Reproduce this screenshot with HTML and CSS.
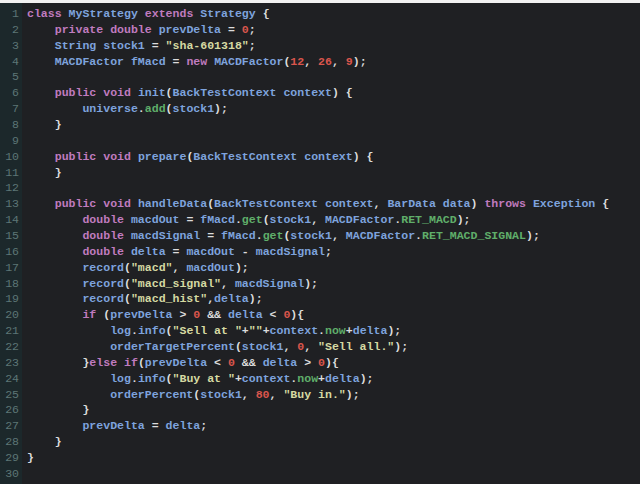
FILE: index.html
```html
<!DOCTYPE html>
<html>
<head>
<meta charset="utf-8">
<link rel="stylesheet" href="styles.css">
</head>
<body>
<div class="topbar"></div>
<div class="editor">
<div class="gutter">
<div>1</div><div>2</div><div>3</div><div>4</div><div>5</div><div>6</div><div>7</div><div>8</div><div>9</div><div>10</div><div>11</div><div>12</div><div>13</div><div>14</div><div>15</div><div>16</div><div>17</div><div>18</div><div>19</div><div>20</div><div>21</div><div>22</div><div>23</div><div>24</div><div>25</div><div>26</div><div>27</div><div>28</div><div>29</div><div>30</div>
</div>
<div class="code">
<div class="ln"><span class="k">class</span> <span class="t">MyStrategy</span> <span class="k">extends</span> <span class="t">Strategy</span> {</div>
<div class="ln i1"><span class="k">private</span> <span class="k">double</span> <span class="t">prevDelta</span> = <span class="n">0</span>;</div>
<div class="ln i1"><span class="t">String</span> <span class="t">stock1</span> = <span class="s">"sha-601318"</span>;</div>
<div class="ln i1"><span class="t">MACDFactor</span> <span class="t">fMacd</span> = <span class="k">new</span> <span class="t">MACDFactor</span>(<span class="n">12</span>, <span class="n">26</span>, <span class="n">9</span>);</div>
<div class="ln"></div>
<div class="ln i1"><span class="k">public</span> <span class="k">void</span> <span class="t">init</span>(<span class="t">BackTestContext</span> <span class="t">context</span>) {</div>
<div class="ln i2"><span class="t">universe</span>.<span class="g">add</span>(<span class="t">stock1</span>);</div>
<div class="ln i1">}</div>
<div class="ln"></div>
<div class="ln i1"><span class="k">public</span> <span class="k">void</span> <span class="t">prepare</span>(<span class="t">BackTestContext</span> <span class="t">context</span>) {</div>
<div class="ln i1">}</div>
<div class="ln"></div>
<div class="ln i1"><span class="k">public</span> <span class="k">void</span> <span class="t">handleData</span>(<span class="t">BackTestContext</span> <span class="t">context</span>, <span class="t">BarData</span> <span class="t">data</span>) <span class="k">throws</span> <span class="t">Exception</span> {</div>
<div class="ln i2"><span class="k">double</span> <span class="t">macdOut</span> = <span class="t">fMacd</span>.<span class="g">get</span>(<span class="t">stock1</span>, <span class="t">MACDFactor</span>.<span class="g">RET_MACD</span>);</div>
<div class="ln i2"><span class="k">double</span> <span class="t">macdSignal</span> = <span class="t">fMacd</span>.<span class="g">get</span>(<span class="t">stock1</span>, <span class="t">MACDFactor</span>.<span class="g">RET_MACD_SIGNAL</span>);</div>
<div class="ln i2"><span class="k">double</span> <span class="t">delta</span> = <span class="t">macdOut</span> - <span class="t">macdSignal</span>;</div>
<div class="ln i2"><span class="t">record</span>(<span class="s">"macd"</span>, <span class="t">macdOut</span>);</div>
<div class="ln i2"><span class="t">record</span>(<span class="s">"macd_signal"</span>, <span class="t">macdSignal</span>);</div>
<div class="ln i2"><span class="t">record</span>(<span class="s">"macd_hist"</span>,<span class="t">delta</span>);</div>
<div class="ln i2"><span class="k">if</span> (<span class="t">prevDelta</span> &gt; <span class="n">0</span> &amp;&amp; <span class="t">delta</span> &lt; <span class="n">0</span>){</div>
<div class="ln i3"><span class="t">log</span>.<span class="t">info</span>(<span class="s">"Sell at "</span>+<span class="s">""</span>+<span class="t">context</span>.<span class="g">now</span>+<span class="t">delta</span>);</div>
<div class="ln i3"><span class="t">orderTargetPercent</span>(<span class="t">stock1</span>, <span class="n">0</span>, <span class="s">"Sell all."</span>);</div>
<div class="ln i2">}<span class="k">else</span> <span class="k">if</span>(<span class="t">prevDelta</span> &lt; <span class="n">0</span> &amp;&amp; <span class="t">delta</span> &gt; <span class="n">0</span>){</div>
<div class="ln i3"><span class="t">log</span>.<span class="t">info</span>(<span class="s">"Buy at "</span>+<span class="t">context</span>.<span class="g">now</span>+<span class="t">delta</span>);</div>
<div class="ln i3"><span class="t">orderPercent</span>(<span class="t">stock1</span>, <span class="n">80</span>, <span class="s">"Buy in."</span>);</div>
<div class="ln i2">}</div>
<div class="ln i2"><span class="t">prevDelta</span> = <span class="t">delta</span>;</div>
<div class="ln i1">}</div>
<div class="ln">}</div>
<div class="ln"></div>
</div>
</div>
</body>
</html>
```
FILE: styles.css
```css
html, body {
  margin: 0;
  padding: 0;
  background: #1f2023;
  height: 100%;
  overflow: hidden;
}
.topbar {
  height: 3px;
  background: #f2f2f2;
}
.editor {
  display: flex;
  height: 481px;
  background: #1f2023;
  font-family: "Liberation Mono", "DejaVu Sans Mono", monospace;
  font-size: 11.55px;
  font-weight: bold;
  line-height: 15.86px;
}
.gutter {
  width: 22px;
  flex: none;
  background: #1c282b;
  color: #5d7676;
  text-align: right;
  padding: 3px 3px 0 0;
  box-sizing: border-box;
  font-weight: normal;
}
.code {
  padding: 3px 0 0 5px;
  color: #dcdcdc;
}
.ln {
  height: 15.86px;
  white-space: pre;
}
.i1 { padding-left: 4ch; }
.i2 { padding-left: 8ch; }
.i3 { padding-left: 12ch; }
.k { color: #c07bbf; }
.t { color: #7ea3dd; }
.g { color: #5fae6a; }
.n { color: #d9554c; }
.s { color: #d5d9a2; }
```
